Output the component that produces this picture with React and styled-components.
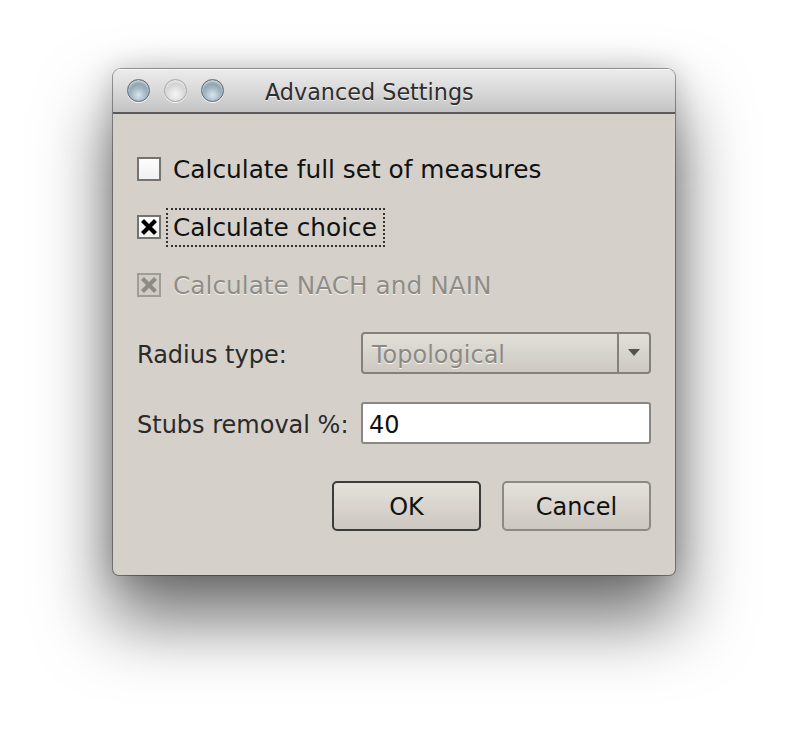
import React from 'react'
import styled, { createGlobalStyle } from 'styled-components'

const GlobalStyle = createGlobalStyle`
  html, body {
    margin: 0;
    background: #fff;
  }
  body {
    font-family: "DejaVu Sans", "Liberation Sans", sans-serif;
  }
`

const Page = styled.div`
  width: 788px;
  height: 732px;
  padding: 69px 0 0 113px;
  box-sizing: border-box;
`

const Window = styled.div`
  width: 562px;
  height: 506px;
  display: flex;
  flex-direction: column;
  border-radius: 8px 8px 6px 6px;
  background: #d5d1ca;
  box-shadow: 0 0 0 1px rgba(0, 0, 0, 0.35), 0 0 30px rgba(0, 0, 0, 0.2),
    0 42px 70px 4px rgba(0, 0, 0, 0.55);
  overflow: hidden;
`

const TitleBar = styled.div`
  height: 43px;
  flex-shrink: 0;
  display: flex;
  align-items: center;
  padding-left: 14px;
  background: linear-gradient(#ececec, #d9d9d9 50%, #c3c3c3);
  border-bottom: 2px solid #5a5a5a;
  box-shadow: inset 0 1px 0 #f8f8f8;
`

const Lights = styled.div`
  display: flex;
  gap: 14px;
`

const Light = styled.span`
  width: 21px;
  height: 21px;
  border-radius: 50%;
  border: 1px solid ${({ dim }) => (dim ? '#a8a8a8' : '#5f6f7a')};
  background: ${({ dim }) =>
    dim
      ? 'radial-gradient(circle at 50% 70%, #f6f6f6 0%, #dcdcdc 45%, #b9b9b9 100%)'
      : 'radial-gradient(circle at 50% 72%, #dbe6ee 0%, #9fb2bf 45%, #6f818d 100%)'};
  box-shadow: inset 0 2px 2px rgba(255, 255, 255, 0.6), 0 1px 0 rgba(255, 255, 255, 0.7);
`

const Title = styled.div`
  margin-left: 41px;
  padding-top: 2px;
  font-size: 22.3px;
  color: #2e2e2e;
  text-shadow: 0 1px 0 rgba(255, 255, 255, 0.7);
`

const Body = styled.div`
  flex: 1;
  display: flex;
  flex-direction: column;
  padding: 35px 24px 0 24px;
`

const CheckRow = styled.div`
  display: flex;
  align-items: center;
  height: 40px;
  margin-bottom: 18px;
`

const Box = styled.span`
  width: 20px;
  height: 20px;
  flex-shrink: 0;
  display: flex;
  align-items: center;
  justify-content: center;
  border: 2px solid ${({ disabled }) => (disabled ? '#a09d98' : '#75736e')};
  background: ${({ disabled }) =>
    disabled ? '#d0ccc5' : 'linear-gradient(#fdfdfd, #f0f0f0)'};
`

const CheckText = styled.span`
  margin-left: 5px;
  height: 39px;
  box-sizing: border-box;
  display: flex;
  align-items: center;
  padding: 0 6px 0 5px;
  border: 2px dotted ${({ focused }) => (focused ? '#333' : 'transparent')};
  font-size: 24.8px;
  color: ${({ disabled }) => (disabled ? '#8f8c87' : '#111')};
  text-shadow: ${({ disabled }) => (disabled ? '0 1px 0 #f4f2ee' : 'none')};
  white-space: nowrap;
`

const FieldGrid = styled.div`
  display: grid;
  grid-template-columns: 224px 1fr;
  row-gap: 28px;
  align-items: center;
  margin-top: 9px;
`

const Label = styled.span`
  padding-top: 4px;
  font-size: 24px;
  color: #2a2a2a;
  white-space: nowrap;
`

const Combo = styled.div`
  height: 42px;
  box-sizing: border-box;
  display: flex;
  border: 2px solid #84817b;
  border-radius: 4px;
  background: linear-gradient(#e2dfd9, #cdc9c2);
`

const ComboValue = styled.span`
  flex: 1;
  display: flex;
  align-items: center;
  padding: 3px 0 0 9px;
  font-size: 24px;
  color: #8c8985;
  text-shadow: 0 1px 0 #f7f5f1;
`

const ComboArrow = styled.span`
  width: 30px;
  display: flex;
  align-items: center;
  justify-content: center;
  border-left: 2px solid #84817b;
`

const TextField = styled.div`
  height: 42px;
  box-sizing: border-box;
  display: flex;
  align-items: center;
  padding: 3px 0 0 6px;
  border: 2px solid #8a8782;
  border-radius: 3px;
  background: #fff;
  font-size: 24px;
  color: #111;
`

const Buttons = styled.div`
  display: flex;
  justify-content: flex-end;
  gap: 21px;
  margin-top: 37px;
`

const Button = styled.div`
  width: 149px;
  height: 50px;
  box-sizing: border-box;
  display: flex;
  align-items: center;
  justify-content: center;
  padding-top: 2px;
  border: 2px solid ${({ primary }) => (primary ? '#3c3c3c' : '#8d8a85')};
  border-radius: 5px;
  background: linear-gradient(#e4e1db, #d6d2cb 60%, #ccc8c1);
  font-size: 24px;
  color: #111;
`

const Cross = ({ color }) => (
  <svg width="16" height="16" viewBox="0 0 16 16">
    <path d="M3 3 L13 13 M13 3 L3 13" stroke={color} strokeWidth="4.2" strokeLinecap="square" />
  </svg>
)

const Check = ({ checked, disabled, focused, children }) => (
  <CheckRow>
    <Box disabled={disabled}>
      {checked && <Cross color={disabled ? '#8e8b87' : '#000'} />}
    </Box>
    <CheckText disabled={disabled} focused={focused}>
      {children}
    </CheckText>
  </CheckRow>
)

export default function App() {
  return (
    <Page>
      <GlobalStyle />
      <Window>
        <TitleBar>
          <Lights>
            <Light />
            <Light dim />
            <Light />
          </Lights>
          <Title>Advanced Settings</Title>
        </TitleBar>
        <Body>
          <Check>Calculate full set of measures</Check>
          <Check checked focused>
            Calculate choice
          </Check>
          <Check checked disabled>
            Calculate NACH and NAIN
          </Check>
          <FieldGrid>
            <Label>Radius type:</Label>
            <Combo>
              <ComboValue>Topological</ComboValue>
              <ComboArrow>
                <svg width="12" height="8" viewBox="0 0 12 8">
                  <path d="M0 0 H12 L6 7 Z" fill="#55534f" />
                </svg>
              </ComboArrow>
            </Combo>
            <Label>Stubs removal %:</Label>
            <TextField>40</TextField>
          </FieldGrid>
          <Buttons>
            <Button primary>OK</Button>
            <Button>Cancel</Button>
          </Buttons>
        </Body>
      </Window>
    </Page>
  )
}
